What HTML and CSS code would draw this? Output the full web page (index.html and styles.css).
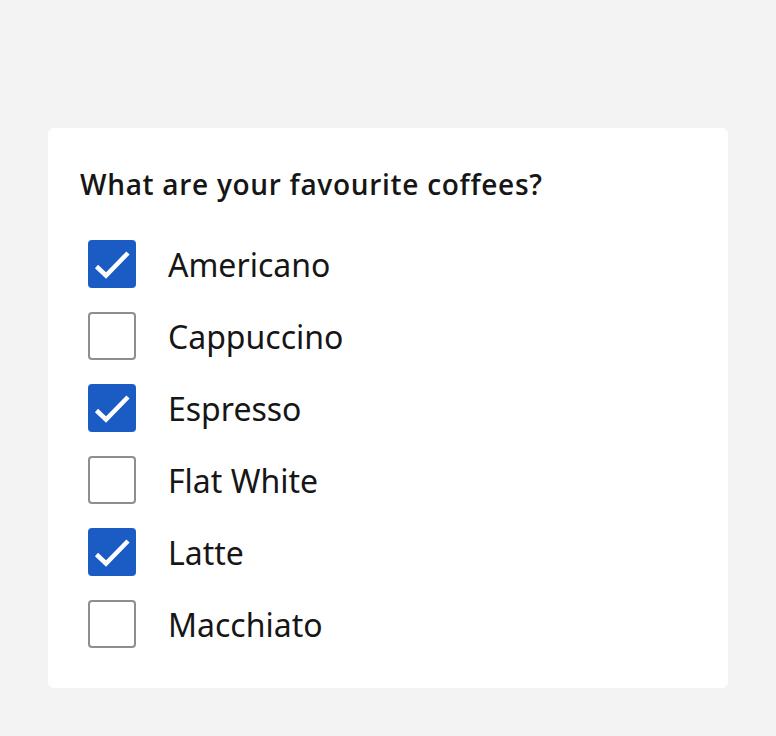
FILE: index.html
```html
<!DOCTYPE html>
<html lang="en">
<head>
  <meta charset="UTF-8" />
  <title>Favourite coffees</title>
  <link rel="stylesheet" href="styles.css">
</head>
<body>
  <div class="card">
    <h2 class="legend">What are your favourite coffees?</h2>

    <ul class="options">
      <li class="option">
        <span class="box checked"><svg viewBox="0 0 48 48"><polyline points="8.5,26.5 18,35.5 40,13" /></svg></span>
        <span class="label">Americano</span>
      </li>
      <li class="option">
        <span class="box"></span>
        <span class="label">Cappuccino</span>
      </li>
      <li class="option">
        <span class="box checked"><svg viewBox="0 0 48 48"><polyline points="8.5,26.5 18,35.5 40,13" /></svg></span>
        <span class="label">Espresso</span>
      </li>
      <li class="option">
        <span class="box"></span>
        <span class="label">Flat White</span>
      </li>
      <li class="option">
        <span class="box checked"><svg viewBox="0 0 48 48"><polyline points="8.5,26.5 18,35.5 40,13" /></svg></span>
        <span class="label">Latte</span>
      </li>
      <li class="option">
        <span class="box"></span>
        <span class="label">Macchiato</span>
      </li>
    </ul>
  </div>
</body>
</html>
```

FILE: styles.css
```css
body { margin: 0; background: #f3f3f3; font-family: "Noto Sans", "Open Sans", sans-serif; color: #161616; }
.card { margin: 128px 48px 0 48px; background: #ffffff; border-radius: 6px; padding: 38px 32px 40px 32px; }
.legend { margin: 0 0 38px 0; font-family: "Open Sans", "Noto Sans", sans-serif; font-size: 28px; line-height: 36px; font-weight: 600; letter-spacing: 0.7px; }
.options { list-style: none; margin: 0; padding: 0 0 0 8px; display: flex; flex-direction: column; gap: 24px; }
.option { display: flex; align-items: center; gap: 32px; }
.box { width: 48px; height: 48px; box-sizing: border-box; border: 2px solid #8d8d92; border-radius: 4px; flex: none; display: flex; }
.box.checked { background: #1a5bc4; border-color: #1a5bc4; }
.box svg { width: 48px; height: 48px; margin: -2px; }
.box polyline { fill: none; stroke: #ffffff; stroke-width: 4.5; }
.label { font-size: 32px; line-height: 1.3; padding-top: 2px; }
```
